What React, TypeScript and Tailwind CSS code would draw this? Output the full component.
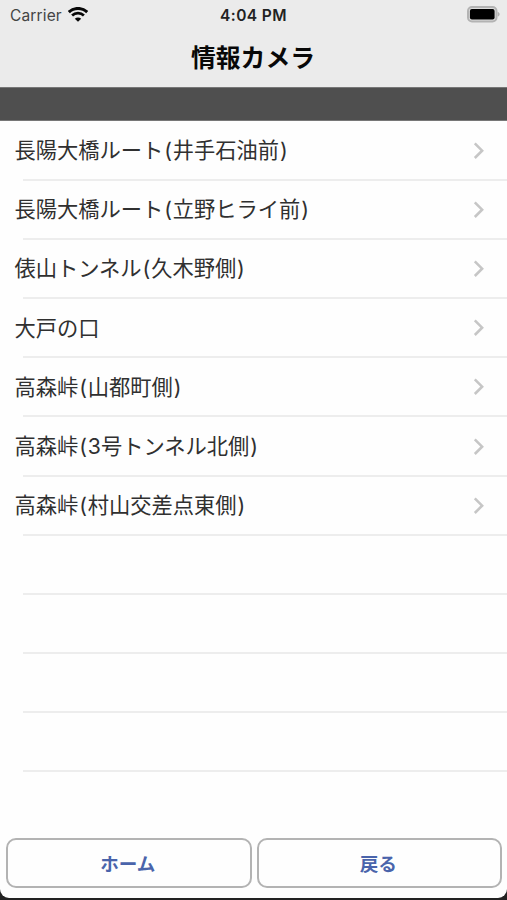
const cameras = [
  { name: '長陽大橋ルート', place: '井手石油前' },
  { name: '長陽大橋ルート', place: '立野ヒライ前' },
  { name: '俵山トンネル', place: '久木野側' },
  { name: '大戸の口' },
  { name: '高森峠', place: '山都町側' },
  { name: '高森峠', place: '3号トンネル北側' },
  { name: '高森峠', place: '村山交差点東側' },
];

const emptyRows = [0, 1, 2, 3];

function WifiIcon() {
  return (
    <svg width="20" height="16" viewBox="0 0 20 16" className="ml-[6px]" fill="none" stroke="#080808">
      <path d="M.8 5.1C5.9.2 14.1.2 19.2 5.1" strokeWidth="3" />
      <path d="M4.1 8.5c3.2-3.1 8.6-3.1 11.8 0" strokeWidth="2.7" />
      <path d="M10 14.8l-3.2-3c1.8-1.6 4.6-1.6 6.4 0z" fill="#080808" stroke="none" />
    </svg>
  );
}

function BatteryIcon() {
  return (
    <svg width="34" height="17" viewBox="0 0 34 17">
      <rect x="1" y="1" width="28.5" height="14.5" rx="4" fill="#ddd" stroke="#b3b3b3" strokeWidth="2" />
      <rect x="2.9" y="3" width="24.7" height="10.5" rx="2" fill="#000" />
      <path d="M30.7 6c2.6.7 2.6 3.8 0 4.5z" fill="#b0b0b0" />
    </svg>
  );
}

function Chevron() {
  return (
    <svg width="11" height="18" viewBox="0 0 11 18" fill="none" stroke="#c6c6c6" strokeWidth="2.6">
      <path d="M1.8 1.4 9.1 8.7l-7.3 7.3" />
    </svg>
  );
}

export default function App() {
  return (
    <div className="h-[900px] w-[507px] overflow-hidden bg-[#222] font-['Inter','Noto_Sans_CJK_JP',sans-serif]">
      <div className="flex h-[898px] flex-col overflow-hidden rounded-b-[9px] bg-[#fefefe]">
        <header className="h-[87px] shrink-0 bg-[#ebebeb]">
          <div className="grid h-[29px] grid-cols-3 items-center text-[15.5px] leading-[29px]">
            <div className="flex items-center pl-[10px] text-[#444]">
              <span className="pt-px tracking-[0.15px]">Carrier</span>
              <WifiIcon />
            </div>
            <div className="pt-px text-center text-[15.5px] font-semibold tracking-[0.4px] text-[#222]">4:04 PM</div>
            <div className="flex justify-end pr-[6px] pb-px">
              <BatteryIcon />
            </div>
          </div>
          <h1 className="pt-px pr-px text-center text-[24.8px] leading-[56px] font-bold text-[#080808]">情報カメラ</h1>
        </header>
        <div className="h-[34px] shrink-0 border-y border-[#777] bg-[#4f4f4f]" />
        <ul className="shrink-0">
          {cameras.map(({ name, place }) => (
            <li key={name + place} className="h-[59.2px]">
              <div className="flex h-[57.6px] items-center justify-between pt-[1.8px] pr-[23px] pl-[14.5px]">
                <span className="text-[21.25px] leading-none whitespace-nowrap text-[#303030]">
                  {name}
                  {place && (
                    <>
                      <span className="px-[0.9px]">(</span>
                      {place}
                      <span className="pl-[0.9px]">)</span>
                    </>
                  )}
                </span>
                <Chevron />
              </div>
              <div className="ml-[23px] h-[2px] bg-[#ededed]" />
            </li>
          ))}
          {emptyRows.map((row) => (
            <li key={row} className="h-[59.2px] pt-[57.6px]">
              <div className="ml-[23px] h-[2px] bg-[#ededed]" />
            </li>
          ))}
        </ul>
        <footer className="mt-auto mb-[10px] grid h-[50px] shrink-0 grid-cols-2 gap-[5px] pr-[5px] pl-[6px]">
          <button className="rounded-[10px] border-2 border-[#b3b3b3] pt-[3px] pr-[2px] text-[18.6px] font-bold text-[#4a64ab]">ホーム</button>
          <button className="rounded-[10px] border-2 border-[#b3b3b3] pt-[3px] pr-[2px] text-[18.6px] font-bold text-[#4a64ab]">戻る</button>
        </footer>
      </div>
    </div>
  );
}
